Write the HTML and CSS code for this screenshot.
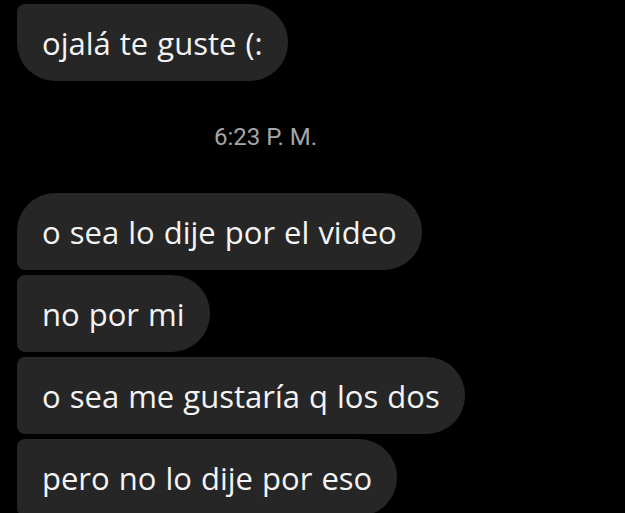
FILE: index.html
```html
<!DOCTYPE html>
<html lang="es">
<head>
<meta charset="utf-8">
<link rel="stylesheet" href="styles.css">
</head>
<body>
<div class="chat">
  <div class="group group-first">
    <div class="bubble last">ojalá te guste (:</div>
  </div>
  <div class="time">6:23 P. M.</div>
  <div class="group">
    <div class="bubble first">o sea lo dije por el video</div>
    <div class="bubble mid">no por mi</div>
    <div class="bubble mid">o sea me gustaría q los dos</div>
    <div class="bubble mid">pero no lo dije por eso</div>
  </div>
</div>
</body>
</html>
```
FILE: styles.css
```css
html, body {
  margin: 0;
  padding: 0;
  background: #000;
  overflow: hidden;
}
.chat {
  width: 625px;
  height: 513px;
  padding: 4px 0 0 17px;
  box-sizing: border-box;
  font-family: "Open Sans", Roboto, sans-serif;
  color: #f4f4f4;
}
.group {
  display: flex;
  flex-direction: column;
  align-items: flex-start;
  gap: 5px;
}
.bubble {
  background: #262626;
  height: 77px;
  box-sizing: border-box;
  padding: 0 25px 0 25px;
  display: flex;
  align-items: center;
  font-size: 31px;
  word-spacing: 1px;
  border-radius: 38px;
}
.bubble.last {
  border-top-left-radius: 8px;
}
.bubble.first {
  border-bottom-left-radius: 8px;
}
.bubble.mid {
  border-top-left-radius: 8px;
  border-bottom-left-radius: 8px;
}
.time {
  height: 112px;
  display: flex;
  align-items: center;
  justify-content: center;
  margin-left: -17px;
  width: 531px;
  font-family: Roboto, sans-serif;
  font-size: 24px;
  color: #a6a6a6;
}
```
